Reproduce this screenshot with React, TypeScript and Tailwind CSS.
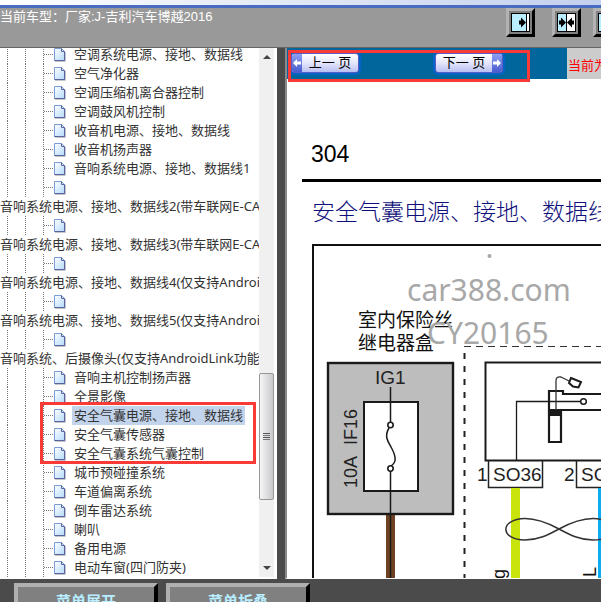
import type { ReactNode } from "react";

type TreeItem = { label: string; wrapped?: boolean; selected?: boolean };

const items: TreeItem[] = [
  { label: "空调系统电源、接地、数据线" },
  { label: "空气净化器" },
  { label: "空调压缩机离合器控制" },
  { label: "空调鼓风机控制" },
  { label: "收音机电源、接地、数据线" },
  { label: "收音机扬声器" },
  { label: "音响系统电源、接地、数据线1" },
  { label: "音响系统电源、接地、数据线2(带车联网E-CALL)", wrapped: true },
  { label: "音响系统电源、接地、数据线3(带车联网E-CALL)", wrapped: true },
  { label: "音响系统电源、接地、数据线4(仅支持AndroidLink)", wrapped: true },
  { label: "音响系统电源、接地、数据线5(仅支持AndroidLink)", wrapped: true },
  { label: "音响系统、后摄像头(仅支持AndroidLink功能)", wrapped: true },
  { label: "音响主机控制扬声器" },
  { label: "全景影像" },
  { label: "安全气囊电源、接地、数据线", selected: true },
  { label: "安全气囊传感器" },
  { label: "安全气囊系统气囊控制" },
  { label: "城市预碰撞系统" },
  { label: "车道偏离系统" },
  { label: "倒车雷达系统" },
  { label: "喇叭" },
  { label: "备用电源" },
  { label: "电动车窗(四门防夹)" },
];

function PageIcon() {
  return (
    <svg width="14" height="15" viewBox="0 0 14 15" className="shrink-0" aria-hidden="true">
      <defs>
        <linearGradient id="sheet" x1="0" y1="0" x2="1" y2="1">
          <stop offset="0" stopColor="#ffffff" />
          <stop offset="1" stopColor="#b4dafb" />
        </linearGradient>
      </defs>
      <path d="M2 14.5H12.5V5" fill="none" stroke="#c4c4cc" />
      <path d="M1.5 1.5H8.5L11.5 4.5V13.5H1.5Z" fill="url(#sheet)" stroke="#7b9bd6" />
      <path d="M8.5 1.5V4.5H11.5V13.5H1.5" fill="none" stroke="#5a649f" />
    </svg>
  );
}

function Guides() {
  return (
    <span className="flex h-full shrink-0" aria-hidden="true">
      <span className="ml-[7px] w-[18px] border-l border-dotted border-[#777]" />
      <span className="w-[18px] border-l border-dotted border-[#777]" />
      <span className="flex w-[10px] items-center border-l border-dotted border-[#777]">
        <span className="w-full border-t border-dotted border-[#777]" />
      </span>
    </span>
  );
}

function TreeNode({ label, wrapped, selected }: TreeItem) {
  return (
    <li>
      <div className="flex h-[19px] items-center">
        <Guides />
        <PageIcon />
        {!wrapped && (
          <a href="#" className={`ml-[5px] px-[2px] leading-[19px] ${selected ? "bg-[#c2d3ec]" : ""}`}>
            {label}
          </a>
        )}
      </div>
      {wrapped && (
        <a href="#" className="block h-[19px] leading-[19px]">
          {label}
        </a>
      )}
    </li>
  );
}

function Arrow({ up }: { up?: boolean }) {
  return (
    <button type="button" aria-label={up ? "向上滚动" : "向下滚动"} className="flex h-[18px] w-full items-center justify-center">
      <svg width="8" height="4" viewBox="0 0 8 4" aria-hidden="true">
        <path d={up ? "M0 4L4 0L8 4Z" : "M0 0L4 4L8 0Z"} fill="#444" />
      </svg>
    </button>
  );
}

function Scrollbar() {
  return (
    <div className="mr-[3px] flex w-[15px] shrink-0 flex-col bg-[#f0f0f0]">
      <Arrow up />
      <div className="flex-[308]" />
      <div className="flex flex-[126] flex-col items-center justify-center gap-px rounded-[2px] border border-[#969696] bg-linear-to-r from-[#f6f6f6] to-[#c9c9cd]">
        <span className="h-px w-[7px] bg-[#555]" />
        <span className="h-px w-[7px] bg-[#777]" />
        <span className="h-px w-[7px] bg-[#555]" />
        <span className="h-px w-[7px] bg-[#777]" />
      </div>
      <div className="flex-[59]" />
      <Arrow />
    </div>
  );
}

function ToolButton({ label, children }: { label: string; children: ReactNode }) {
  return (
    <button
      type="button"
      aria-label={label}
      className="flex size-[29px] shrink-0 items-center justify-center border-[3px] border-t-[#b3b3b3] border-r-black border-b-black border-l-[#b3b3b3] bg-[#808080]"
    >
      <svg width="19" height="19" viewBox="0 0 19 19" className="shrink-0" aria-hidden="true">
        {children}
      </svg>
    </button>
  );
}

function Toolbar() {
  return (
    <div className="flex w-[95px] shrink-0 gap-[12px]">
      <div className="flex shrink-0 gap-[17px]">
        <ToolButton label="展开左侧">
          <rect x="0.5" y="0.5" width="18" height="18" fill="#fff" stroke="#000" />
          <rect x="1" y="1" width="14" height="17" fill="#b8eeff" />
          <path d="M15.5 1V18" stroke="#000" />
          <path d="M8 7.5H10V4.5L15 9.5L10 14.5V11.5H8Z" fill="#000" />
        </ToolButton>
        <ToolButton label="左右均分">
          <rect x="0.5" y="0.5" width="18" height="18" fill="#fff" stroke="#000" />
          <rect x="1" y="1" width="8" height="17" fill="#b8eeff" />
          <path d="M9.5 1V18" stroke="#000" />
          <path d="M2 7.5H4V4.5L9 9.5L4 14.5V11.5H2Z M17 7.5H15V4.5L10 9.5L15 14.5V11.5H17Z" fill="#000" />
        </ToolButton>
      </div>
      <ToolButton label="展开右侧">
        <rect x="0.5" y="0.5" width="18" height="18" fill="#fff" stroke="#000" />
        <rect x="1" y="1" width="3" height="17" fill="#b8eeff" />
        <path d="M4.5 1V18" stroke="#000" />
      </ToolButton>
    </div>
  );
}

function PagerArrow({ back }: { back?: boolean }) {
  return (
    <span className="flex h-full w-[10px] items-center justify-center bg-linear-to-b from-[#8ea0f2] to-[#4a5bd0]">
      <svg width="8" height="8" viewBox="0 0 8 8" aria-hidden="true">
        <path d={back ? "M0 4L4 0V2.500H8V5.500H4V8Z" : "M8 4L4 0V2.500H0V5.500H4V8Z"} fill="#fff" />
      </svg>
    </span>
  );
}

function PagerButton({ back, children }: { back?: boolean; children: ReactNode }) {
  return (
    <button
      type="button"
      className="flex h-[20px] w-[68px] items-center overflow-hidden rounded-[3px] border border-[#5a5cc0] bg-linear-to-b from-white via-[#e4e6fb] to-[#b9bff2] text-black outline-2 outline-[#0064c8]"
    >
      {back && <PagerArrow back />}
      <span className="flex-1 leading-[18px]">{children}</span>
      {!back && <PagerArrow />}
    </button>
  );
}

function Diagram() {
  return (
    <svg
      width="600"
      height="338"
      viewBox="287 240 600 338"
      className="shrink-0 font-['Liberation_Sans','Noto_Sans_CJK_SC',sans-serif]"
      role="img"
      aria-label="安全气囊电路图"
    >
      <path d="M313 578V245H880" fill="none" stroke="#111" strokeWidth="2" />
      <g fontSize="19" fill="#111">
        <text x="358" y="327">室内保险丝</text>
        <text x="358" y="350">继电器盒</text>
      </g>

      <rect x="386" y="515" width="9" height="63" fill="#6f4123" />
      <rect x="328" y="363" width="125" height="151" fill="#bdbdbd" stroke="#1a1a1a" strokeWidth="2.4" />
      <rect x="364" y="402" width="54" height="89" fill="#fff" stroke="#1a1a1a" strokeWidth="2" />
      <path d="M390.5 387V422M390.5 471V578" stroke="#1a1a1a" strokeWidth="1.5" />
      <path d="M389 428C384 436 388 442 391 447C396 456 397 462 391 466" fill="none" stroke="#1a1a1a" strokeWidth="1.5" />
      <g fill="#fff" stroke="#1a1a1a" strokeWidth="1.6">
        <circle cx="390.5" cy="425" r="2.7" />
        <circle cx="390.5" cy="468.5" r="2.7" />
      </g>
      <g fontSize="19" fill="#222">
        <text x="375" y="384">IG1</text>
        <text x="477" y="481">1</text>
        <text x="493" y="481">SO36</text>
        <text x="564" y="481">2</text>
        <text x="581" y="481">SO37</text>
      </g>
      <g fontSize="18" fill="#222">
        <text transform="translate(357 488) rotate(-90)">10A</text>
        <text transform="translate(357 445) rotate(-90)">IF16</text>
      </g>

      <path d="M464.5 347V578" stroke="#222" strokeWidth="2" strokeDasharray="6 7" strokeDashoffset="-6" />
      <path d="M464 346.5H880" stroke="#333" strokeWidth="1.2" strokeDasharray="7 5" />

      <path d="M880 362.5H485.5V460.5H880" fill="none" stroke="#1a1a1a" strokeWidth="2" />
      <path d="M516.5 460V401.5H580" fill="none" stroke="#1a1a1a" strokeWidth="1.3" />
      <path d="M880 394H563V391H549V442H561V410H880" fill="none" stroke="#1a1a1a" strokeWidth="2.2" />
      <rect x="549" y="409" width="12" height="7" fill="#1a1a1a" />
      <path d="M556 410V381Q556 376 561 377L569 381" fill="none" stroke="#333" strokeWidth="1.3" />
      <path d="M571 378L581 382L578.5 387.5L573 386.5L569 383Z" fill="#fff" stroke="#1a1a1a" strokeWidth="2" />
      <circle cx="583.5" cy="401.5" r="2.8" fill="#fff" stroke="#1a1a1a" strokeWidth="1.5" />
      <path d="M488.5 460V487.5H542.5V460M576.5 460V487.5H632V460" fill="none" stroke="#222" strokeWidth="1.5" />

      <rect x="511" y="488" width="9" height="90" fill="#c9e30c" />
      <rect x="598" y="488" width="9" height="90" fill="#0bacf0" />
      <path
        d="M559 529C548 523 538 518.500 525 518.500C499 519 500 540 525 540C538 540 548 535 559 529C570 523 580 518.500 593 518.500C619 519 618 540 593 540C580 540 570 535 559 529Z"
        fill="none"
        stroke="#333"
        strokeWidth="1.5"
      />
      <g fontSize="18" fill="#111">
        <text transform="translate(505 579) rotate(-90)">g</text>
        <text transform="translate(596 577) rotate(-90)">L</text>
      </g>

      <g fontSize="30" fill="#a8a8a8" className="font-['Noto_Sans',sans-serif]">
        <circle cx="489.500" cy="256" r="2" />
        <text x="407" y="301">car388.com</text>
        <text x="427" y="344">CY20165</text>
      </g>
    </svg>
  );
}

function MenuButton({ children }: { children: ReactNode }) {
  return (
    <button
      type="button"
      className="h-[38px] w-[144px] border-4 border-t-[#b0b0b0] border-r-black border-b-black border-l-[#b0b0b0] bg-[#808080] text-[15px] font-bold text-[#b8eeff]"
    >
      {children}
    </button>
  );
}

export default function App() {
  return (
    <div className="flex h-screen flex-col overflow-hidden bg-[#4b4b4b] font-['Liberation_Sans','Noto_Sans_CJK_SC',sans-serif] text-[13px]">
      <div className="h-[5px] shrink-0 bg-linear-to-r from-white to-[#c3d0ee]" />
      <div className="h-[3px] shrink-0 bg-[#4a6cc0]" />
      <header className="flex h-[40px] shrink-0 border-b border-[#666] bg-[#999]">
        <h1 className="min-w-0 flex-1 leading-[17px] whitespace-nowrap text-white">当前车型：厂家:J-吉利汽车博越2016</h1>
        <Toolbar />
      </header>

      <main className="flex min-h-0 flex-1">
        <nav className="relative flex w-[277px] shrink-0 overflow-hidden bg-white pb-[2px]">
          <div className="min-w-0 flex-1 overflow-hidden font-['Noto_Sans','Noto_Sans_CJK_SC',sans-serif] whitespace-nowrap text-[#333]">
            <ul className="-mt-[3px]">
              {items.map((item) => (
                <TreeNode key={item.label} {...item} />
              ))}
            </ul>
          </div>
          <Scrollbar />
          <div className="pointer-events-none absolute top-[354px] left-[40px] h-[62px] w-[216px] border-[3px] border-[#f93a37]" />
        </nav>

        <section className="relative ml-[8px] flex min-w-0 flex-1 flex-col overflow-hidden border-b border-l-2 border-b-white border-l-[#8a8a8a] bg-white">
          <div className="flex h-[31px] shrink-0">
            <div className="flex w-[280px] shrink-0 gap-[76px] bg-[#00669b] pt-[5px] pl-[4px]">
              <PagerButton back>上一 页</PagerButton>
              <PagerButton>下一 页</PagerButton>
            </div>
            <div className="min-w-0 flex-1 overflow-hidden bg-[#ccc] pl-px leading-[36px] whitespace-nowrap text-[#f00]">当前为</div>
          </div>
          <p className="shrink-0 pt-[62px] pl-[24px] text-[23px] leading-[26px] text-black">304</p>
          <hr className="mt-[12px] ml-[15px] shrink-0 border-t-[3px] border-black" />
          <h2 className="h-[58px] shrink-0 pl-[25px] text-[23px] leading-[60px] font-light whitespace-nowrap text-[#10107c]">
            安全气囊电源、接地、数据线
          </h2>
          <Diagram />
          <div className="pointer-events-none absolute top-[2px] left-px h-[32px] w-[242px] border-[3px] border-[#f93a37]" />
        </section>
      </main>

      <footer className="flex h-[23px] shrink-0 gap-[8px] overflow-hidden pt-[4px] pl-[14px]">
        <MenuButton>菜单展开</MenuButton>
        <MenuButton>菜单折叠</MenuButton>
      </footer>
    </div>
  );
}
